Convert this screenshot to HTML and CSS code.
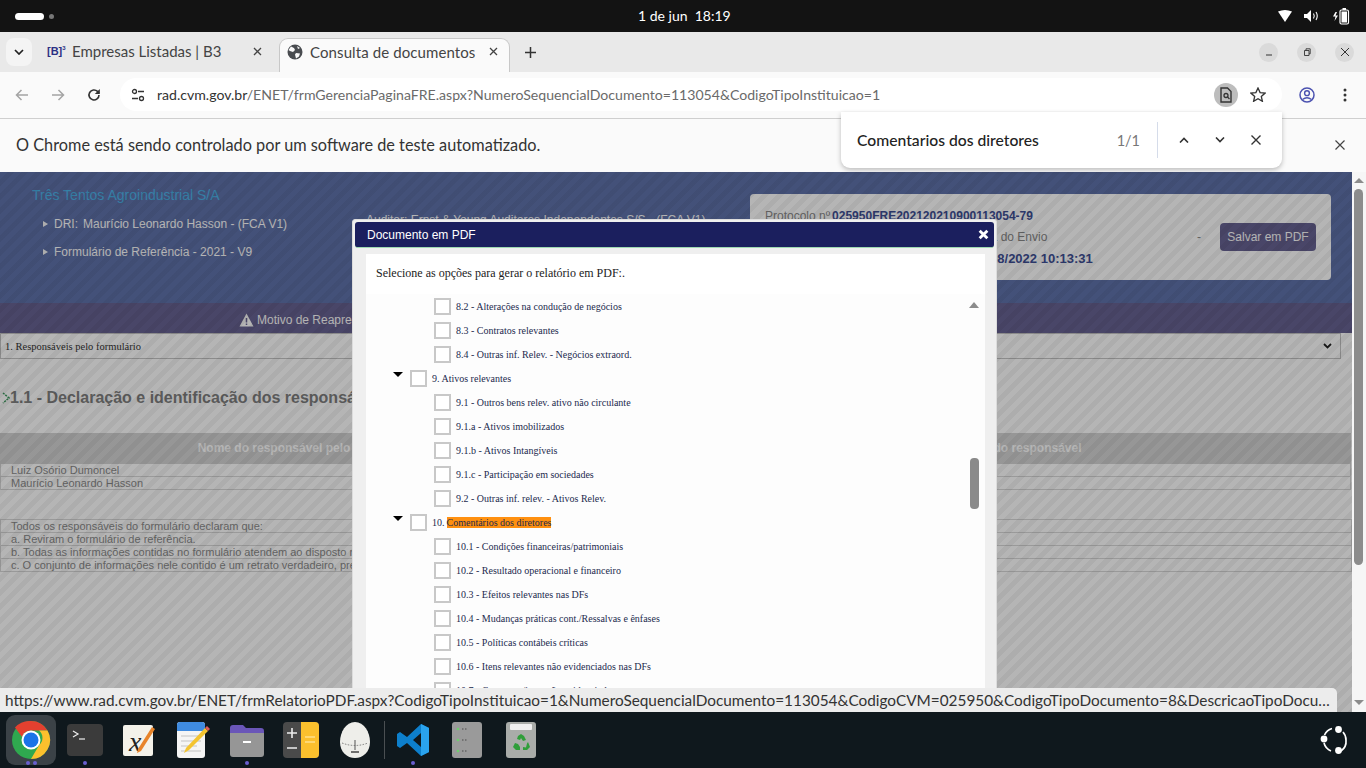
FILE: index.html
```html
<!DOCTYPE html>
<html lang="pt-BR">
<head>
  <title>Consulta de documentos</title>
  <meta charset="utf-8">
  <link rel="stylesheet" href="styles.css">
</head>
<body>
  <div class="topbar">
    <div class="workspaces"><span class="ws-pill"></span><span class="ws-dot"></span></div>
    <div class="clock">1 de jun&nbsp;&nbsp;18:19</div>
    <div class="tray">
      <svg width="14" height="12" viewBox="0 0 14 12"><path d="M0 1.5Q7 -1.5 14 1.5L7 12Z" fill="#fff"/></svg>
      <svg width="16" height="14" viewBox="0 0 16 14"><path d="M0 5h3l4-4v12l-4-4H0Z" fill="#fff"/><path d="M9.5 4.5q1.5 2.5 0 5M12 3q2.5 4 0 8" fill="none" stroke="#fff" stroke-width="1.1"/></svg>
      <svg width="18" height="18" viewBox="0 0 18 18"><path d="M3.5 5 1 9.5h2.5L2.5 14 6 8.5H3.5L5 5Z" fill="#fff"/><rect x="8" y="3" width="8.5" height="14" rx="1.5" fill="none" stroke="#fff" stroke-width="1.2"/><rect x="9.5" y="4.5" width="5.5" height="11" fill="#fff"/><rect x="10.5" y="1" width="3.5" height="2" fill="#fff"/></svg>
    </div>
  </div>

  <div class="tabstrip">
    <button class="tab-list"><svg width="10" height="6" viewBox="0 0 10 6"><path d="M1 1l4 4 4-4" fill="none" stroke="#222" stroke-width="1.7"/></svg></button>
    <div class="tab">
      <span class="b3-icon">[B]<sup>3</sup></span>
      <span class="tab-title">Empresas Listadas | B3</span>
      <svg class="tab-close" width="9" height="9" viewBox="0 0 9 9"><path d="M1 1l7 7M8 1l-7 7" stroke="#444" stroke-width="1.3"/></svg>
    </div>
    <div class="tab tab-active">
      <svg width="16" height="16" viewBox="0 0 16 16"><circle cx="8" cy="8" r="7.5" fill="#494c50"/><path d="M4 2.5l3 1.5 1 2-2 2-3-1-1.5-1ZM9 9l4 .5-1 3-3 2-1-4ZM10 2l3 2-2 1Z" fill="#fafafa"/></svg>
      <span class="tab-title">Consulta de documentos</span>
      <svg class="tab-close" width="9" height="9" viewBox="0 0 9 9"><path d="M1 1l7 7M8 1l-7 7" stroke="#444" stroke-width="1.3"/></svg>
    </div>
    <svg class="new-tab" width="11" height="11" viewBox="0 0 11 11"><path d="M5.5 0v11M0 5.5h11" stroke="#333" stroke-width="1.5"/></svg>
    <div class="win-buttons">
      <span class="win-btn"><svg width="8" height="8" viewBox="0 0 8 8"><path d="M1 7h6" stroke="#333" stroke-width="1"/></svg></span>
      <span class="win-btn"><svg width="8" height="8" viewBox="0 0 8 8"><path d="M1.5 2.5h4.5v5H1.5ZM3 2.5V.8h4.2v5H6" fill="none" stroke="#333" stroke-width=".9"/></svg></span>
      <span class="win-btn"><svg width="10" height="10" viewBox="0 0 10 10"><path d="M1 1l8 8M9 1l-8 8" stroke="#333" stroke-width="1"/></svg></span>
    </div>
  </div>

  <div class="toolbar">
    <svg class="nav" width="14" height="12" viewBox="0 0 14 12"><path d="M13 6H2M6.5 1 1.5 6l5 5" fill="none" stroke="#a4a4a4" stroke-width="1.5"/></svg>
    <svg class="nav" width="14" height="12" viewBox="0 0 14 12"><path d="M1 6h11M7.5 1l5 5-5 5" fill="none" stroke="#a4a4a4" stroke-width="1.5"/></svg>
    <svg class="nav" width="14" height="14" viewBox="0 0 14 14"><path d="M12 7a5 5 0 1 1-1.5-3.6L12 5" fill="none" stroke="#333" stroke-width="1.6"/><path d="M12.8 1v5h-5Z" fill="#333"/></svg>
    <div class="omnibox">
      <svg width="14" height="14" viewBox="0 0 14 14"><circle cx="3.5" cy="3.5" r="2" fill="none" stroke="#333" stroke-width="1.3"/><path d="M7 3.5h6M1 10.5h6" stroke="#333" stroke-width="1.3"/><circle cx="10.5" cy="10.5" r="2" fill="none" stroke="#333" stroke-width="1.3"/></svg>
      <span class="url"><b>rad.cvm.gov.br</b>/ENET/frmGerenciaPaginaFRE.aspx?NumeroSequencialDocumento=113054&amp;CodigoTipoInstituicao=1</span>
      <span class="doc-search"><svg width="12" height="16" viewBox="0 0 12 16"><path d="M1 1h6.5L11 4.5V15H1Z" fill="none" stroke="#333" stroke-width="1.4"/><circle cx="6" cy="8.5" r="2" fill="none" stroke="#333" stroke-width="1.3"/><path d="M7.5 10l2 2" stroke="#333" stroke-width="1.3"/></svg></span>
      <svg class="star" width="16" height="15" viewBox="0 0 16 15"><path d="M8 1l2.1 4.6 5 .5-3.8 3.3 1.1 4.9L8 11.8l-4.4 2.5 1.1-4.9L.9 6.1l5-.5Z" fill="none" stroke="#333" stroke-width="1.3"/></svg>
    </div>
    <svg class="profile" width="16" height="16" viewBox="0 0 16 16"><circle cx="8" cy="8" r="7" fill="none" stroke="#4b52b0" stroke-width="1.5"/><circle cx="8" cy="6.2" r="2.4" fill="none" stroke="#4b52b0" stroke-width="1.4"/><path d="M3.5 12.5q4.5-3.5 9 0" fill="none" stroke="#4b52b0" stroke-width="1.4"/></svg>
    <svg class="menu" width="4" height="14" viewBox="0 0 4 14"><circle cx="2" cy="2" r="1.5" fill="#333"/><circle cx="2" cy="7" r="1.5" fill="#333"/><circle cx="2" cy="12" r="1.5" fill="#333"/></svg>
  </div>

  <div class="infobar">
    <span>O Chrome está sendo controlado por um software de teste automatizado.</span>
    <svg width="10" height="10" viewBox="0 0 10 10"><path d="M.5.5l9 9M9.5.5l-9 9" stroke="#444" stroke-width="1.2"/></svg>
  </div>

  <div class="findbar">
    <span class="find-text">Comentarios dos diretores</span>
    <span class="find-count">1/1</span>
    <span class="find-sep"></span>
    <svg width="10" height="6" viewBox="0 0 10 6"><path d="M1 5.5l4-4 4 4" fill="none" stroke="#333" stroke-width="1.6"/></svg>
    <svg width="10" height="6" viewBox="0 0 10 6"><path d="M1 .5l4 4 4-4" fill="none" stroke="#333" stroke-width="1.6"/></svg>
    <svg width="10" height="10" viewBox="0 0 10 10"><path d="M.5.5l9 9M9.5.5l-9 9" stroke="#333" stroke-width="1.4"/></svg>
  </div>

  <div class="viewport">
    <div class="page">
      <header class="fre-header">
        <div class="fre-id">
          <a class="company">Três Tentos Agroindustrial S/A</a>
          <div class="fre-item">DRI:<span class="dri-name">Maurício Leonardo Hasson - (FCA V1)</span></div>
          <div class="fre-item">Formulário de Referência - 2021 - V9</div>
        </div>
        <div class="fre-auditor">Auditor: Ernst &amp; Young Auditores Independentes S/S - (FCA V1)</div>
        <div class="protocol-card">
          <div class="protocol-col">
            <div>Protocolo nº<b>025950FRE202120210900113054-79</b></div>
            <div class="envio-row"><span class="envio-label">Data do Envio</span><span>-</span></div>
            <div class="envio-date"><b>01/08/2022 10:13:31</b></div>
          </div>
          <button class="pdf-btn">Salvar em PDF</button>
        </div>
      </header>
      <div class="motivo">
        <svg width="15" height="14" viewBox="0 0 15 14"><path d="M7.5 .5l7 13H.5Z" fill="#fff"/><path d="M7.5 5v4.5M7.5 10.5v1.5" stroke="#676292" stroke-width="1.5"/></svg>
        <span>Motivo de Reapresentação</span>
      </div>
      <div class="section-select"><span>1. Responsáveis pelo formulário</span><svg width="9" height="6" viewBox="0 0 9 6"><path d="M1 1l3.5 3.5L8 1" fill="none" stroke="#222" stroke-width="1.8"/></svg></div>
      <h1 class="section-title"><svg width="8" height="12" viewBox="0 0 8 12"><path d="M1 1l6 5-6 5" fill="none" stroke="#3c9a5f" stroke-width="1.5" stroke-dasharray="2 1"/></svg>1.1 - Declaração e identificação dos responsáveis</h1>
      <div class="resp-table">
        <div class="resp-head"><span>Nome do responsável pelo conteúdo do formulário</span><span>Cargo do responsável</span></div>
        <div class="resp-row">Luiz Osório Dumoncel</div>
        <div class="resp-row">Maurício Leonardo Hasson</div>
      </div>
      <div class="declare">
        <div class="declare-row">Todos os responsáveis do formulário declaram que:</div>
        <div class="declare-row">a. Reviram o formulário de referência.</div>
        <div class="declare-row">b. Todas as informações contidas no formulário atendem ao disposto na Instrução CVM nº 480</div>
        <div class="declare-row">c. O conjunto de informações nele contido é um retrato verdadeiro, preciso e completo</div>
      </div>
      <div class="page-dim"></div>
    </div>

    <div class="scrollbar">
      <span class="arrow-up"></span>
      <span class="thumb"></span>
      <span class="arrow-down"></span>
    </div>

    <div class="modal">
      <div class="modal-title"><span>Documento em PDF</span><svg width="11" height="11" viewBox="0 0 10 10"><path d="M1.5 1.5l7 7M8.5 1.5l-7 7" stroke="#fff" stroke-width="2.6"/></svg></div>
      <div class="modal-body">
        <p class="modal-lead">Selecione as opções para gerar o relatório em PDF:.</p>
        <ul class="tree">
          <li class="leaf"><i></i>8.2 - Alterações na condução de negócios</li>
          <li class="leaf"><i></i>8.3 - Contratos relevantes</li>
          <li class="leaf"><i></i>8.4 - Outras inf. Relev. - Negócios extraord.</li>
          <li class="branch"><i></i>9. Ativos relevantes</li>
          <li class="leaf"><i></i>9.1 - Outros bens relev. ativo não circulante</li>
          <li class="leaf"><i></i>9.1.a - Ativos imobilizados</li>
          <li class="leaf"><i></i>9.1.b - Ativos Intangíveis</li>
          <li class="leaf"><i></i>9.1.c - Participação em sociedades</li>
          <li class="leaf"><i></i>9.2 - Outras inf. relev. - Ativos Relev.</li>
          <li class="branch"><i></i>10. <mark>Comentários dos diretores</mark></li>
          <li class="leaf"><i></i>10.1 - Condições financeiras/patrimoniais</li>
          <li class="leaf"><i></i>10.2 - Resultado operacional e financeiro</li>
          <li class="leaf"><i></i>10.3 - Efeitos relevantes nas DFs</li>
          <li class="leaf"><i></i>10.4 - Mudanças práticas cont./Ressalvas e ênfases</li>
          <li class="leaf"><i></i>10.5 - Políticas contábeis críticas</li>
          <li class="leaf"><i></i>10.6 - Itens relevantes não evidenciados nas DFs</li>
          <li class="leaf"><i></i>10.7 - Coment. s/itens não evidenciados</li>
        </ul>
        <span class="tree-up"></span>
        <span class="tree-thumb"></span>
      </div>
    </div>

    <div class="status-bubble">https://www.rad.cvm.gov.br/ENET/frmRelatorioPDF.aspx?CodigoTipoInstituicao=1&amp;NumeroSequencialDocumento=113054&amp;CodigoCVM=025950&amp;CodigoTipoDocumento=8&amp;DescricaoTipoDocu…</div>
  </div>

  <footer class="dock">
    <div class="dock-item dock-active">
      <svg width="44" height="44" viewBox="0 0 44 44"><circle cx="22" cy="22" r="19" fill="#2fa84f"/><path d="M22 3a19 19 0 0 1 16.5 9.5H22a9.5 9.5 0 0 0-9 6.5L6 9.5A19 19 0 0 1 22 3Z" fill="#e4402f"/><path d="M38.5 12.5A19 19 0 0 1 22 41l8.2-14A9.5 9.5 0 0 0 30 12.5Z" fill="#fbc02d"/><circle cx="22" cy="22" r="9.5" fill="#fff"/><circle cx="22" cy="22" r="7.5" fill="#1a73e8"/></svg>
      <span class="run-dots"><em></em><em></em></span>
    </div>
    <div class="dock-item">
      <svg width="36" height="32" viewBox="0 0 36 32"><rect width="36" height="32" rx="4" fill="#3b3b3b"/><path d="M6 7l5 3-5 3" fill="none" stroke="#eee" stroke-width="1.2"/><path d="M12 15h6" stroke="#eee" stroke-width="1.2"/></svg>
      <span class="run-dots"><em></em></span>
    </div>
    <div class="dock-item">
      <svg width="36" height="36" viewBox="0 0 36 36"><rect x="2" y="3" width="30" height="31" rx="2" fill="#f4f2ea"/><text x="8" y="29" class="xournal-x">x</text><path d="M17 27 31 5l3 2-14 22-4 2Z" fill="#e8842a"/></svg>
    </div>
    <div class="dock-item">
      <svg width="36" height="38" viewBox="0 0 36 38"><rect x="2" y="1" width="28" height="36" rx="3" fill="#f5f5f5"/><path d="M2 4a3 3 0 0 1 3-3h22a3 3 0 0 1 3 3v6H2Z" fill="#3f8be0"/><path d="M6 15h20M6 20h20M6 25h16M6 30h20" stroke="#c4c4c4" stroke-width="1.2"/><path d="M9 32l2-5 19-20 3 3-19 19Z" fill="#f4c430"/><path d="M30 7l2-2 3 3-2 2Z" fill="#e05a5a"/></svg>
    </div>
    <div class="dock-item">
      <svg width="36" height="34" viewBox="0 0 36 34"><path d="M1 5a3 3 0 0 1 3-3h10l3 3h15a3 3 0 0 1 3 3v5H1Z" fill="#6a56b8"/><path d="M1 10h34v21a3 3 0 0 1-3 3H4a3 3 0 0 1-3-3Z" fill="#969696"/><path d="M14 19h8" stroke="#fff" stroke-width="2"/></svg>
      <span class="run-dots"><em></em></span>
    </div>
    <div class="dock-item">
      <svg width="36" height="36" viewBox="0 0 36 36"><rect width="36" height="36" rx="4" fill="#4a4a4a"/><path d="M18 0h14a4 4 0 0 1 4 4v28a4 4 0 0 1-4 4H18Z" fill="#fbc02d"/><path d="M4 11h10M9 6v10M4 26h10" stroke="#eee" stroke-width="1.6"/><path d="M22 15h10M22 20h10" stroke="#ffe08a" stroke-width="1.6"/></svg>
    </div>
    <div class="dock-item">
      <svg width="30" height="36" viewBox="0 0 30 36"><path d="M15 0C24 0 30 10 30 20c0 10-7 16-15 16S0 30 0 20C0 10 6 0 15 0Z" fill="#eeeeea"/><path d="M2 21q13 5 26 0" fill="none" stroke="#777" stroke-width="1" stroke-dasharray="1.5 1.5"/><path d="M15 18v10" stroke="#555" stroke-width="1"/><path d="M11 30h8" stroke="#444" stroke-width="1.5"/></svg>
    </div>
    <span class="dock-sep"></span>
    <div class="dock-item">
      <svg width="34" height="34" viewBox="0 0 34 34"><path d="M25 1l8 4v24l-8 4-14-13-7 5-3-2v-12l3-2 7 5Zm0 9-8 7 8 7Z" fill="#0d7fcc"/><path d="M25 1l8 4v24l-8 4Z" fill="#2aa3ee"/></svg>
      <span class="run-dots"><em></em></span>
    </div>
    <div class="dock-item">
      <svg width="30" height="36" viewBox="0 0 30 36"><rect width="30" height="36" rx="3" fill="#9a9a9a"/><circle cx="6" cy="7" r="1.3" fill="#6fcf6f"/><circle cx="6" cy="18" r="1.3" fill="#6fcf6f"/><circle cx="6" cy="29" r="1.3" fill="#6fcf6f"/><path d="M10 7h6M10 18h6M10 29h6" stroke="#666" stroke-width="1.5" stroke-dasharray="1.5 1.5"/></svg>
    </div>
    <div class="dock-item">
      <svg width="30" height="36" viewBox="0 0 30 36"><rect width="30" height="36" rx="3" fill="#a9aca9"/><rect x="4" y="2" width="22" height="6" rx="1" fill="#f0f0f0"/><path d="M12 14l3-2 3 2 2 4-3 1-2-3-1 2-3-1ZM9 21l3 1 2 3v3h-4l-3-3ZM22 20l2 5-3 3h-4v-3l3 .5 1-4Z" fill="#2f9e3a"/></svg>
    </div>
    <svg class="ubuntu-logo" width="30" height="30" viewBox="0 0 30 30"><path d="M12 3.5A12 12 0 0 0 4.5 10M4 18a12 12 0 0 0 7 8M21 26a12 12 0 0 0 5-11 12 12 0 0 0-3-8" fill="none" stroke="#fff" stroke-width="1.7"/><circle cx="18.5" cy="4.5" r="3.4" fill="#fff"/><circle cx="4" cy="14" r="3.4" fill="#fff"/><circle cx="18.5" cy="25.5" r="3.4" fill="#fff"/></svg>
  </footer>
</body>
</html>
```

FILE: styles.css
```css
* {
  box-sizing: border-box;
}

html, body {
  height: 768px;
  margin: 0;
  overflow: hidden;
  width: 1366px;
}

body {
  background: #fafafa;
  color: #333;
  display: flex;
  flex-direction: column;
  font-family: "Lato", "Noto Sans", sans-serif;
  position: relative;
}

/* system bar */
.topbar {
  align-items: center;
  background: #131313;
  color: #fff;
  display: flex;
  flex: 0 0 32px;
  font-size: 14px;
  justify-content: space-between;
  padding: 0 16px 0 15px;
  position: relative;
}

.workspaces {
  align-items: center;
  display: flex;
  gap: 5px;
}

.ws-pill {
  background: #fff;
  border-radius: 4px;
  height: 7px;
  width: 29px;
}

.ws-dot {
  background: #777;
  border-radius: 50%;
  height: 5px;
  width: 5px;
}

.clock {
  left: 638px;
  position: absolute;
  top: 7px;
}

.tray {
  align-items: center;
  display: flex;
  gap: 12px;
}

/* tabs */
.tabstrip {
  align-items: center;
  background: #e9e9e9;
  display: flex;
  flex: 0 0 40px;
  padding: 0 12px 0 6px;
}

.tab-list {
  align-items: center;
  background: #f4f4f4;
  border: 0;
  border-radius: 8px;
  display: flex;
  height: 28px;
  justify-content: center;
  padding: 0;
  width: 26px;
}

.tab {
  align-items: center;
  align-self: flex-end;
  display: flex;
  font-size: 15px;
  height: 34px;
  margin-left: 7px;
  padding: 0 17px 8px 8px;
  width: 240px;
}

.b3-icon {
  color: #2b2f83;
  font-family: "Liberation Sans", sans-serif;
  font-size: 11px;
  font-weight: 700;
  width: 25px;
}

.b3-icon sup {
  font-size: 6px;
}

.tab-title {
  color: #444;
  flex: 1;
  white-space: nowrap;
}

.tab-active {
  background: #fafafa;
  border: 1px solid #c8c8c8;
  border-bottom: 0;
  border-radius: 9px 9px 0 0;
  margin-left: 0;
  padding: 0 11px 8px 7px;
  width: 231px;
}

.tab-active .tab-title {
  letter-spacing: 0.1px;
  margin-left: 7px;
}

.new-tab {
  margin-left: 15px;
}

.win-buttons {
  display: flex;
  gap: 19px;
  margin-left: auto;
}

.win-btn {
  align-items: center;
  background: #dadada;
  border-radius: 50%;
  display: flex;
  height: 19px;
  justify-content: center;
  width: 19px;
}

/* address bar */
.toolbar {
  align-items: center;
  background: #fafafa;
  border-bottom: 1px solid #cfcfcf;
  border-radius: 8px 8px 0 0;
  display: flex;
  flex: 0 0 47px;
  padding: 0 19px 1px 15px;
}

.nav {
  flex: none;
  margin-right: 22px;
}

.omnibox {
  align-items: center;
  background: #fff;
  border-radius: 17px;
  display: flex;
  flex: none;
  height: 33px;
  margin-left: -3px;
  padding: 0 16px 0 11px;
  width: 1162px;
}

.url {
  color: #6a6a6a;
  flex: 1;
  font-size: 14.1px;
  margin-left: 12px;
  margin-top: -1px;
  white-space: nowrap;
}

.url b {
  color: #333;
  font-weight: 400;
}

.doc-search {
  align-items: center;
  background: #bdbdbd;
  border-radius: 50%;
  display: flex;
  height: 24px;
  justify-content: center;
  width: 24px;
}

.star {
  margin-left: 12px;
}

.profile {
  flex: none;
  margin-left: 17px;
}

.menu {
  flex: none;
  margin-left: 28px;
}

/* automation notice */
.infobar {
  align-items: center;
  background: #fafafa;
  display: flex;
  flex: 0 0 53px;
  font-size: 16.3px;
  justify-content: space-between;
  padding: 0 21px 2px 16px;
}

.findbar {
  align-items: center;
  background: #fff;
  border-radius: 0 0 9px 9px;
  box-shadow: 0 2px 5px rgba(0, 0, 0, 0.25);
  display: flex;
  height: 56px;
  left: 841px;
  padding: 0 21px 0 16px;
  position: absolute;
  top: 112px;
  width: 441px;
  z-index: 5;
}

.find-text {
  color: #222;
  flex: 1;
  font-size: 15.7px;
  font-weight: 500;
  margin-top: -1px;
}

.find-count {
  color: #777;
  font-size: 14.5px;
}

.find-sep {
  background: #d5dcea;
  height: 36px;
  margin: 0 21px 0 17px;
  width: 1px;
}

.findbar svg {
  margin-right: 26px;
}

.findbar svg:last-child {
  margin-right: 0;
}

/* page behind the dialog */
.viewport {
  flex: 0 0 540px;
  overflow: hidden;
  position: relative;
}

.page {
  background: #fff;
  font-family: "Liberation Sans", sans-serif;
  height: 540px;
  overflow: hidden;
  position: relative;
  width: 1352px;
}

.page-dim {
  background: repeating-linear-gradient(135deg, rgba(0, 0, 0, 0.29) 0 5px, rgba(0, 0, 0, 0.32) 5px 10px);
  inset: 0;
  position: absolute;
}

.fre-header {
  background: #5f72aa;
  display: flex;
  height: 131px;
  padding: 22px 21px 0 32px;
}

.fre-id {
  color: #fff;
  flex: none;
  font-size: 12px;
  margin-top: -7px;
  width: 334px;
}

.company {
  color: #4cb4ea;
  display: block;
  font-size: 14px;
  margin-bottom: 7px;
}

.fre-item {
  align-items: center;
  display: flex;
  height: 28px;
  padding-left: 22px;
  position: relative;
}

.fre-item::before {
  border-bottom: 3px solid transparent;
  border-left: 5px solid #fff;
  border-top: 3px solid transparent;
  content: '';
  left: 11px;
  position: absolute;
}

.dri-name {
  margin-left: 5px;
}

.fre-auditor {
  color: #fff;
  flex: none;
  font-size: 12px;
  margin-top: 19px;
  white-space: nowrap;
  width: 384px;
}

.protocol-card {
  align-items: center;
  background: #fff;
  border-radius: 4px;
  color: #888;
  display: flex;
  flex: none;
  font-size: 12px;
  height: 86px;
  padding: 0 15px;
  width: 581px;
}

.protocol-col {
  display: flex;
  flex: none;
  flex-direction: column;
  gap: 7px;
  white-space: nowrap;
  width: 455px;
}

.protocol-col b {
  color: #3e4f96;
}

.protocol-col > div:first-child b {
  margin-left: 2px;
}

.envio-row {
  display: flex;
}

.envio-label {
  margin-left: 207px;
  width: 225px;
}

.envio-date {
  font-size: 13px;
  padding-left: 207px;
}

.pdf-btn {
  background: #676292;
  border: 0;
  border-radius: 4px;
  color: #fff;
  font: 12px "Liberation Sans", sans-serif;
  height: 28px;
  width: 96px;
}

.motivo {
  align-items: center;
  background: #676292;
  color: #fff;
  display: flex;
  font-size: 12px;
  gap: 3px;
  height: 30px;
  padding: 3px 0 0 239px;
}

.section-select {
  align-items: center;
  border: 1px solid #c4c4c4;
  color: #333;
  display: flex;
  font-family: "Liberation Serif", serif;
  font-size: 10.5px;
  height: 26px;
  justify-content: space-between;
  margin-right: 11px;
  padding: 0 8px 0 4px;
}

.section-title {
  align-items: center;
  color: #808080;
  display: flex;
  font-size: 16px;
  height: 20px;
  margin: 29px 0 25px;
  padding-left: 2px;
  white-space: nowrap;
}

.resp-table {
  margin-right: 1px;
}

.resp-head {
  background: #d4d4d4;
  color: #fff;
  display: grid;
  font-size: 12px;
  font-weight: 700;
  grid-template-columns: 686px 1fr;
  height: 31px;
  line-height: 30px;
  text-align: center;
}

.resp-row, .declare-row {
  border: 1px solid #d8d8d8;
  border-top: 0;
  color: #8c8c8c;
  font-size: 11px;
  height: 13px;
  line-height: 12px;
  padding-left: 10px;
  white-space: nowrap;
}

.declare {
  border-top: 1px solid #d8d8d8;
  margin-top: 29px;
}

/* scrollbar of the window */
.scrollbar {
  background: #f6f6f6;
  bottom: 0;
  position: absolute;
  right: 0;
  top: 0;
  width: 14px;
}

.arrow-up, .arrow-down, .tree-up {
  border-left: 5px solid transparent;
  border-right: 5px solid transparent;
  left: 2px;
  position: absolute;
}

.arrow-up {
  border-bottom: 5px solid #8c8c8c;
  top: 6px;
}

.arrow-down {
  border-top: 5px solid #8c8c8c;
  bottom: 7px;
}

.thumb {
  background: #8c8c8c;
  border-radius: 5px;
  height: 376px;
  left: 2px;
  position: absolute;
  top: 17px;
  width: 9px;
}

/* dialog */
.modal {
  background: #efefef;
  border: 1px solid #dcdcdc;
  border-radius: 3px;
  height: 495px;
  left: 352px;
  overflow: hidden;
  padding: 2px;
  position: absolute;
  top: 47px;
  width: 645px;
  z-index: 2;
}

.modal-title {
  align-items: center;
  background: #1b1f5e;
  border-bottom: 1px solid #9fd8b0;
  border-radius: 3px;
  color: #fff;
  display: flex;
  font: 12px "Liberation Sans", sans-serif;
  height: 26px;
  justify-content: space-between;
  padding: 0 5px 0 12px;
}

.modal-body {
  background: #fff;
  height: 470px;
  margin: 6px 9px 0 11px;
  overflow: hidden;
  position: relative;
}

.modal-lead {
  color: #222;
  font: 12px "Liberation Serif", serif;
  margin: 0;
  padding: 12px 10px 0;
}

.tree {
  background: #fdfdfd;
  font: 10px "Liberation Serif", serif;
  list-style: none;
  margin: 13px 0 0;
  padding: 0;
}

.tree li {
  align-items: center;
  color: #232a4e;
  display: flex;
  height: 24px;
  position: relative;
  white-space: nowrap;
}

.tree i {
  background: #fff;
  border: 2px solid #c8c8c8;
  height: 17px;
  margin-right: 5px;
  width: 17px;
}

.leaf {
  padding-left: 68px;
}

.branch {
  padding-left: 44px;
}

.branch::before {
  border-left: 5px solid transparent;
  border-right: 5px solid transparent;
  border-top: 5px solid #000;
  content: '';
  left: 27px;
  position: absolute;
  top: 6px;
}

.tree mark {
  background: #ff9010;
  color: #232a4e;
  margin-left: 2px;
}

.tree-up {
  border-bottom: 6px solid #8c8c8c;
  left: 603px;
  top: 48px;
}

.tree-thumb {
  background: #8a8a8a;
  border-radius: 4px;
  height: 51px;
  left: 604px;
  position: absolute;
  top: 204px;
  width: 9px;
}

/* link preview */
.status-bubble {
  background: #ececec;
  border-radius: 0 5px 0 0;
  bottom: 0;
  color: #333;
  font-size: 15.35px;
  height: 24px;
  left: 0;
  line-height: 24px;
  overflow: hidden;
  padding: 0 12px 0 5px;
  position: absolute;
  white-space: nowrap;
  width: 1337px;
  z-index: 3;
}

/* dock */
.dock {
  align-items: center;
  background: #0f181d;
  display: flex;
  flex: 0 0 56px;
  padding-left: 4px;
  position: relative;
}

.dock-item {
  align-items: center;
  display: flex;
  flex: 0 0 54px;
  height: 56px;
  justify-content: center;
  position: relative;
}

.dock-active::before {
  background: #3b4247;
  border-radius: 9px;
  content: '';
  height: 50px;
  left: 2px;
  position: absolute;
  top: 3px;
  width: 50px;
}

.dock-active svg {
  position: relative;
}

.run-dots {
  bottom: 3px;
  display: flex;
  gap: 3px;
  position: absolute;
}

.run-dots em {
  background: #6a5fd0;
  border-radius: 50%;
  height: 4px;
  width: 4px;
}

.dock-sep {
  background: #4a4f52;
  height: 38px;
  margin: 0 1px 0 2px;
  width: 1px;
}

.xournal-x {
  fill: #222;
  font: italic 28px "Liberation Serif", serif;
}

.ubuntu-logo {
  margin-left: auto;
  margin-right: 16px;
}
```
